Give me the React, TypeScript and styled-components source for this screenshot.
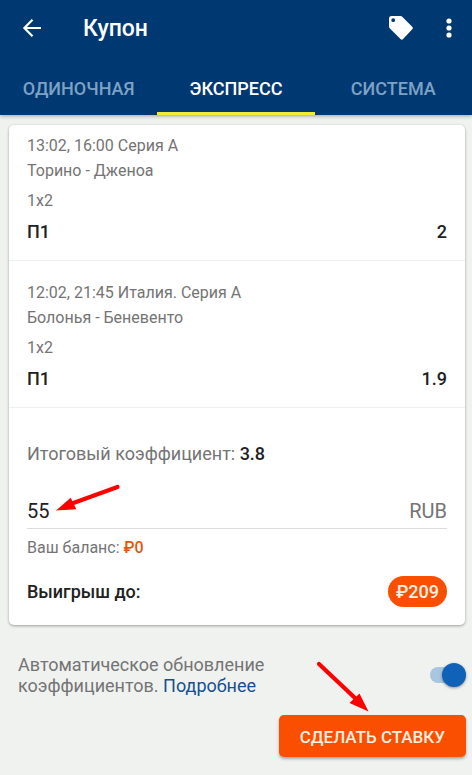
import React, { useState } from "react";
import styled, { createGlobalStyle } from "styled-components";

const GlobalStyle = createGlobalStyle`
  *, *::before, *::after { box-sizing: border-box; }
  body {
    margin: 0;
    background: #f0f2f0;
    color: #212121;
    font-family: Roboto, "Noto Sans", sans-serif;
  }
  button, input { font: inherit; }
`;

const Page = styled.div`
  display: flex;
  flex-direction: column;
  min-height: 100vh;
`;

const Header = styled.header`
  background: #003972;
  color: #fff;
  box-shadow: 0 1px 4px rgba(0, 0, 0, 0.35);
`;

const Toolbar = styled.div`
  display: flex;
  align-items: center;
  height: 56px;
  padding: 0 7px 0 16px;
`;

const IconButton = styled.button`
  display: flex;
  align-items: center;
  justify-content: center;
  width: 32px;
  height: 40px;
  padding: 0;
  border: 0;
  background: none;
  color: inherit;
  cursor: pointer;
`;

const Title = styled.h1`
  flex: 1;
  margin: 0;
  padding: 2px 0 0 35px;
  font-size: 23px;
  font-weight: 500;
  line-height: 32px;
`;

const Actions = styled.div`
  display: flex;
  gap: 16px;
`;

const Tabs = styled.div`
  display: grid;
  grid-template-columns: repeat(3, 1fr);
`;

const Tab = styled.button<{ $active: boolean }>`
  height: 59px;
  padding: 8px 0 0;
  border: 0;
  border-bottom: 3px solid ${(p) => (p.$active ? "#f3ea35" : "transparent")};
  background: none;
  color: ${(p) => (p.$active ? "#fff" : "#7da2c5")};
  font-size: 18px;
  font-weight: 500;
  cursor: pointer;
`;

const Card = styled.main`
  margin: 10px 7px 0 9px;
  border-radius: 5px;
  background: #fff;
  box-shadow: 0 1px 3px rgba(0, 0, 0, 0.35);
`;

const Bet = styled.section`
  padding: 22px 18px 16px;
  border-bottom: 1px solid #eef0f0;
  &:first-child { padding-top: 11px; }
`;

const Detail = styled.p`
  margin: 0 0 5px;
  color: #747474;
  font-size: 16px;
  line-height: 20px;
`;

const Market = styled(Detail)`
  margin: 10px 0 9px;
`;

const Outcome = styled.div`
  display: flex;
  justify-content: space-between;
  font-size: 18px;
  font-weight: 500;
  line-height: 24px;
`;

const Summary = styled.section`
  padding: 34px 18px 18px;
`;

const Total = styled.p`
  margin: 0;
  color: #747474;
  font-size: 18px;
  line-height: 24px;
`;

const Strong = styled.strong`
  color: #212121;
  font-weight: 500;
`;

const StakeField = styled.div`
  position: relative;
  display: flex;
  align-items: center;
  height: 36px;
  margin-top: 27px;
  border-bottom: 1px solid #dcdcdc;
  color: #747474;
  font-size: 20px;
`;

const StakeInput = styled.input`
  flex: 1;
  min-width: 0;
  padding: 0;
  border: 0;
  outline: 0;
  background: none;
  color: #212121;
`;

const Balance = styled.p`
  margin: 9px 0 0;
  color: #747474;
  font-size: 16px;
  line-height: 20px;
`;

const Money = styled.strong`
  color: #e4560c;
  font-weight: 500;
`;

const Winnings = styled.div`
  display: flex;
  align-items: center;
  justify-content: space-between;
  margin-top: 18px;
  font-size: 18px;
  font-weight: 500;
`;

const Payout = styled.span`
  padding: 0 8px;
  border-radius: 16px;
  background: #fa4f00;
  color: #fff0e0;
  line-height: 31px;
`;

const Footer = styled.footer`
  padding: 29px 6px 18px 18px;
`;

const AutoUpdate = styled.div`
  display: flex;
  align-items: center;
  justify-content: space-between;
`;

const AutoText = styled.label`
  max-width: 260px;
  color: #747474;
  font-size: 18px;
  line-height: 21px;
`;

const MoreLink = styled.a`
  color: #16508f;
  text-decoration: none;
`;

const Switch = styled.input`
  appearance: none;
  display: flex;
  align-items: center;
  flex: none;
  width: 36px;
  height: 16px;
  margin: 0;
  border-radius: 8px;
  background: #c4c8cb;
  cursor: pointer;
  &::before {
    content: "";
    width: 24px;
    height: 24px;
    border-radius: 50%;
    background: #fafafa;
    box-shadow: 0 1px 3px rgba(0, 0, 0, 0.4);
  }
  &:checked {
    justify-content: flex-end;
    background: #a9c6e1;
  }
  &:checked::before { background: #1062b8; }
`;

const SubmitRow = styled.div`
  position: relative;
  display: flex;
  justify-content: flex-end;
  margin-top: 19px;
`;

const Submit = styled.button`
  height: 42px;
  padding: 1px 21px 0;
  border: 0;
  border-radius: 5px;
  background: #fb4f00;
  color: #fff0e0;
  font-size: 17px;
  font-weight: 500;
  box-shadow: 0 2px 3px rgba(0, 0, 0, 0.3);
  cursor: pointer;
`;

const StakePointer = styled.svg`
  position: absolute;
  left: 28px;
  top: -9px;
  pointer-events: none;
`;

const SubmitPointer = styled.svg`
  position: absolute;
  right: 96px;
  top: -55px;
  pointer-events: none;
`;

const bets = [
  { when: "13:02, 16:00 Серия А", teams: "Торино - Дженоа", odds: "2" },
  { when: "12:02, 21:45 Италия. Серия А", teams: "Болонья - Беневенто", odds: "1.9" },
];

const tabs = ["ОДИНОЧНАЯ", "ЭКСПРЕСС", "СИСТЕМА"];

export default function App() {
  const [active, setActive] = useState(1);
  const [stake, setStake] = useState("55");
  const [auto, setAuto] = useState(true);

  return (
    <Page>
      <GlobalStyle />
      <Header>
        <Toolbar>
          <IconButton aria-label="Назад">
            <svg width="20" height="20" viewBox="0 0 20 20" fill="none" stroke="currentColor" strokeWidth="2.200">
              <path d="M19 10H3M10.500 1.800L2.400 10l8.100 8.200" />
            </svg>
          </IconButton>
          <Title>Купон</Title>
          <Actions>
            <IconButton aria-label="Промокод">
              <svg width="24" height="24" viewBox="0 0 24 24" fill="currentColor">
                <path
                  fillRule="evenodd"
                  d="M2.500 0H11.500Q12.600 0 13.500.9L23.200 10.700Q24.500 12 23.200 13.300L14.100 23.100Q12.800 24.400 11.500 23.100L.9 12.500Q0 11.600 0 10.500V2.500Q0 0 2.500 0ZM4.200 2.300a1.900 1.900 0 1 0 0 3.800a1.900 1.900 0 1 0 0-3.800Z"
                />
              </svg>
            </IconButton>
            <IconButton aria-label="Меню">
              <svg width="6" height="20" viewBox="0 0 6 20" fill="currentColor">
                <circle cx="3" cy="3" r="2.600" />
                <circle cx="3" cy="10" r="2.600" />
                <circle cx="3" cy="17" r="2.600" />
              </svg>
            </IconButton>
          </Actions>
        </Toolbar>
        <Tabs role="tablist">
          {tabs.map((name, i) => (
            <Tab key={name} role="tab" aria-selected={i === active} $active={i === active} onClick={() => setActive(i)}>
              {name}
            </Tab>
          ))}
        </Tabs>
      </Header>

      <Card>
        {bets.map((bet) => (
          <Bet key={bet.when}>
            <Detail>{bet.when}</Detail>
            <Detail>{bet.teams}</Detail>
            <Market>1x2</Market>
            <Outcome>
              <span>П1</span>
              <span>{bet.odds}</span>
            </Outcome>
          </Bet>
        ))}
        <Summary>
          <Total>
            Итоговый коэффициент: <Strong>3.8</Strong>
          </Total>
          <StakeField>
            <StakeInput
              aria-label="Сумма ставки"
              inputMode="numeric"
              value={stake}
              onChange={(e) => setStake(e.target.value)}
            />
            <span>RUB</span>
            <StakePointer width="66" height="30" viewBox="0 0 66 30" aria-hidden="true">
              <path d="M17 19.500L62.500 3" stroke="#f00" strokeWidth="4.200" strokeLinecap="round" />
              <path d="M1 26.500L15.700 13.700L21.300 25.300Z" fill="#f00" />
            </StakePointer>
          </StakeField>
          <Balance>
            Ваш баланс: <Money>₽0</Money>
          </Balance>
          <Winnings>
            <span>Выигрыш до:</span>
            <Payout>₽209</Payout>
          </Winnings>
        </Summary>
      </Card>

      <Footer>
        <AutoUpdate>
          <AutoText htmlFor="auto">
            Автоматическое обновление коэффициентов. <MoreLink href="#more">Подробнее</MoreLink>
          </AutoText>
          <Switch id="auto" type="checkbox" role="switch" checked={auto} onChange={(e) => setAuto(e.target.checked)} />
        </AutoUpdate>
        <SubmitRow>
          <Submit type="button">СДЕЛАТЬ СТАВКУ</Submit>
          <SubmitPointer width="56" height="54" viewBox="0 0 56 54" aria-hidden="true">
            <path d="M5 4L41 38" stroke="#f00" strokeWidth="4.200" strokeLinecap="round" />
            <path d="M54.500 51.500L35.500 43L45.500 33.500Z" fill="#f00" />
          </SubmitPointer>
        </SubmitRow>
      </Footer>
    </Page>
  );
}
